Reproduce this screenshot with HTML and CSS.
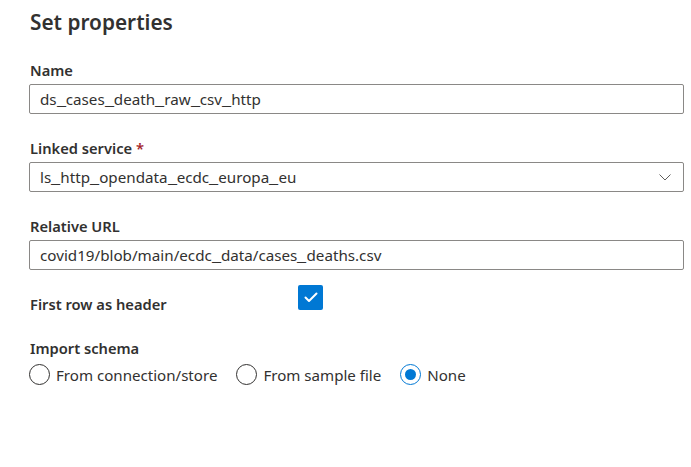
FILE: index.html
```html
<!DOCTYPE html>
<html>
<head>
<meta charset="utf-8">
<link rel="stylesheet" href="styles.css">
</head>
<body>
<div class="panel">
  <h1 class="title">Set properties</h1>

  <div class="field">
    <div class="label">Name</div>
    <div class="input">ds<span class="us">_</span>cases<span class="us">_</span>death<span class="us">_</span>raw<span class="us">_</span>csv<span class="us">_</span>http</div>
  </div>

  <div class="field">
    <div class="label">Linked service <span class="req">*</span></div>
    <div class="input select">
      <span>ls<span class="us">_</span>http<span class="us">_</span>opendata<span class="us">_</span>ecdc<span class="us">_</span>europa<span class="us">_</span>eu</span>
      <svg class="chev" width="12" height="7" viewBox="0 0 12 7"><path d="M0.5 0.5 L6 6 L11.5 0.5" fill="none" stroke="#605e5c" stroke-width="1"/></svg>
    </div>
  </div>

  <div class="field">
    <div class="label">Relative URL</div>
    <div class="input">covid19/blob/main/ecdc<span class="us">_</span>data/cases<span class="us">_</span>deaths.csv</div>
  </div>

  <div class="row-check">
    <div class="label check-label">First row as header</div>
    <div class="checkbox">
      <svg width="14" height="11" viewBox="0 0 14 11"><path d="M1.5 5.5 L5 9 L12.5 1.5" fill="none" stroke="#fff" stroke-width="2" stroke-linecap="round" stroke-linejoin="round"/></svg>
    </div>
  </div>

  <div class="field schema">
    <div class="label">Import schema</div>
    <div class="radios">
      <div class="radio"><span class="dot"></span><span>From connection/store</span></div>
      <div class="radio"><span class="dot"></span><span>From sample file</span></div>
      <div class="radio"><span class="dot on"></span><span>None</span></div>
    </div>
  </div>
</div>
</body>
</html>
```

FILE: styles.css
```css
html, body {
  margin: 0;
  padding: 0;
  background: #ffffff;
}
body {
  font-family: "Segoe UI", "Noto Sans", "Open Sans", sans-serif;
  color: #323130;
}
.panel {
  padding: 6px 7px 0 29px;
}
.title {
  margin: 0 0 0 1px;
  font-size: 20.8px;
  font-weight: 600;
  line-height: 32px;
}
.field {
  margin-top: 22px;
}
.field + .field {
  margin-top: 24px;
}
.label {
  font-size: 14.7px;
  font-weight: 600;
  line-height: 20px;
  padding-left: 1px;
  margin-bottom: 4px;
}
.req {
  color: #a4262c;
}
.input {
  box-sizing: border-box;
  height: 30px;
  border: 1px solid #8a8886;
  border-radius: 2px;
  padding: 0 10px;
  font-size: 15.2px;
  line-height: 28px;
  color: #323130;
  white-space: nowrap;
}
.us {
  display: inline-block;
  padding: 0 1.2px;
  transform: scaleX(1.35);
}
.select {
  display: flex;
  justify-content: space-between;
  align-items: center;
  padding-right: 12px;
}
.row-check {
  display: flex;
  align-items: flex-start;
  margin-top: 15px;
}
.check-label {
  width: 268px;
  margin: 0;
  padding-top: 9px;
}
.checkbox {
  width: 25px;
  height: 25px;
  background: #0078d4;
  border-radius: 2px;
  display: flex;
  align-items: center;
  justify-content: center;
}
.schema {
  margin-top: 24px;
}
.schema .label {
  margin-bottom: 6px;
}
.radios {
  display: flex;
  align-items: center;
  gap: 19px;
}
.radio {
  display: flex;
  align-items: center;
  gap: 6px;
  font-size: 15.1px;
  line-height: 20px;
}
.dot {
  box-sizing: border-box;
  width: 21px;
  height: 21px;
  border: 1px solid #323130;
  border-radius: 50%;
  position: relative;
}
.dot.on {
  border-color: #0078d4;
}
.dot.on::after {
  content: "";
  position: absolute;
  left: 4px;
  top: 4px;
  width: 11px;
  height: 11px;
  border-radius: 50%;
  background: #0078d4;
}
```
